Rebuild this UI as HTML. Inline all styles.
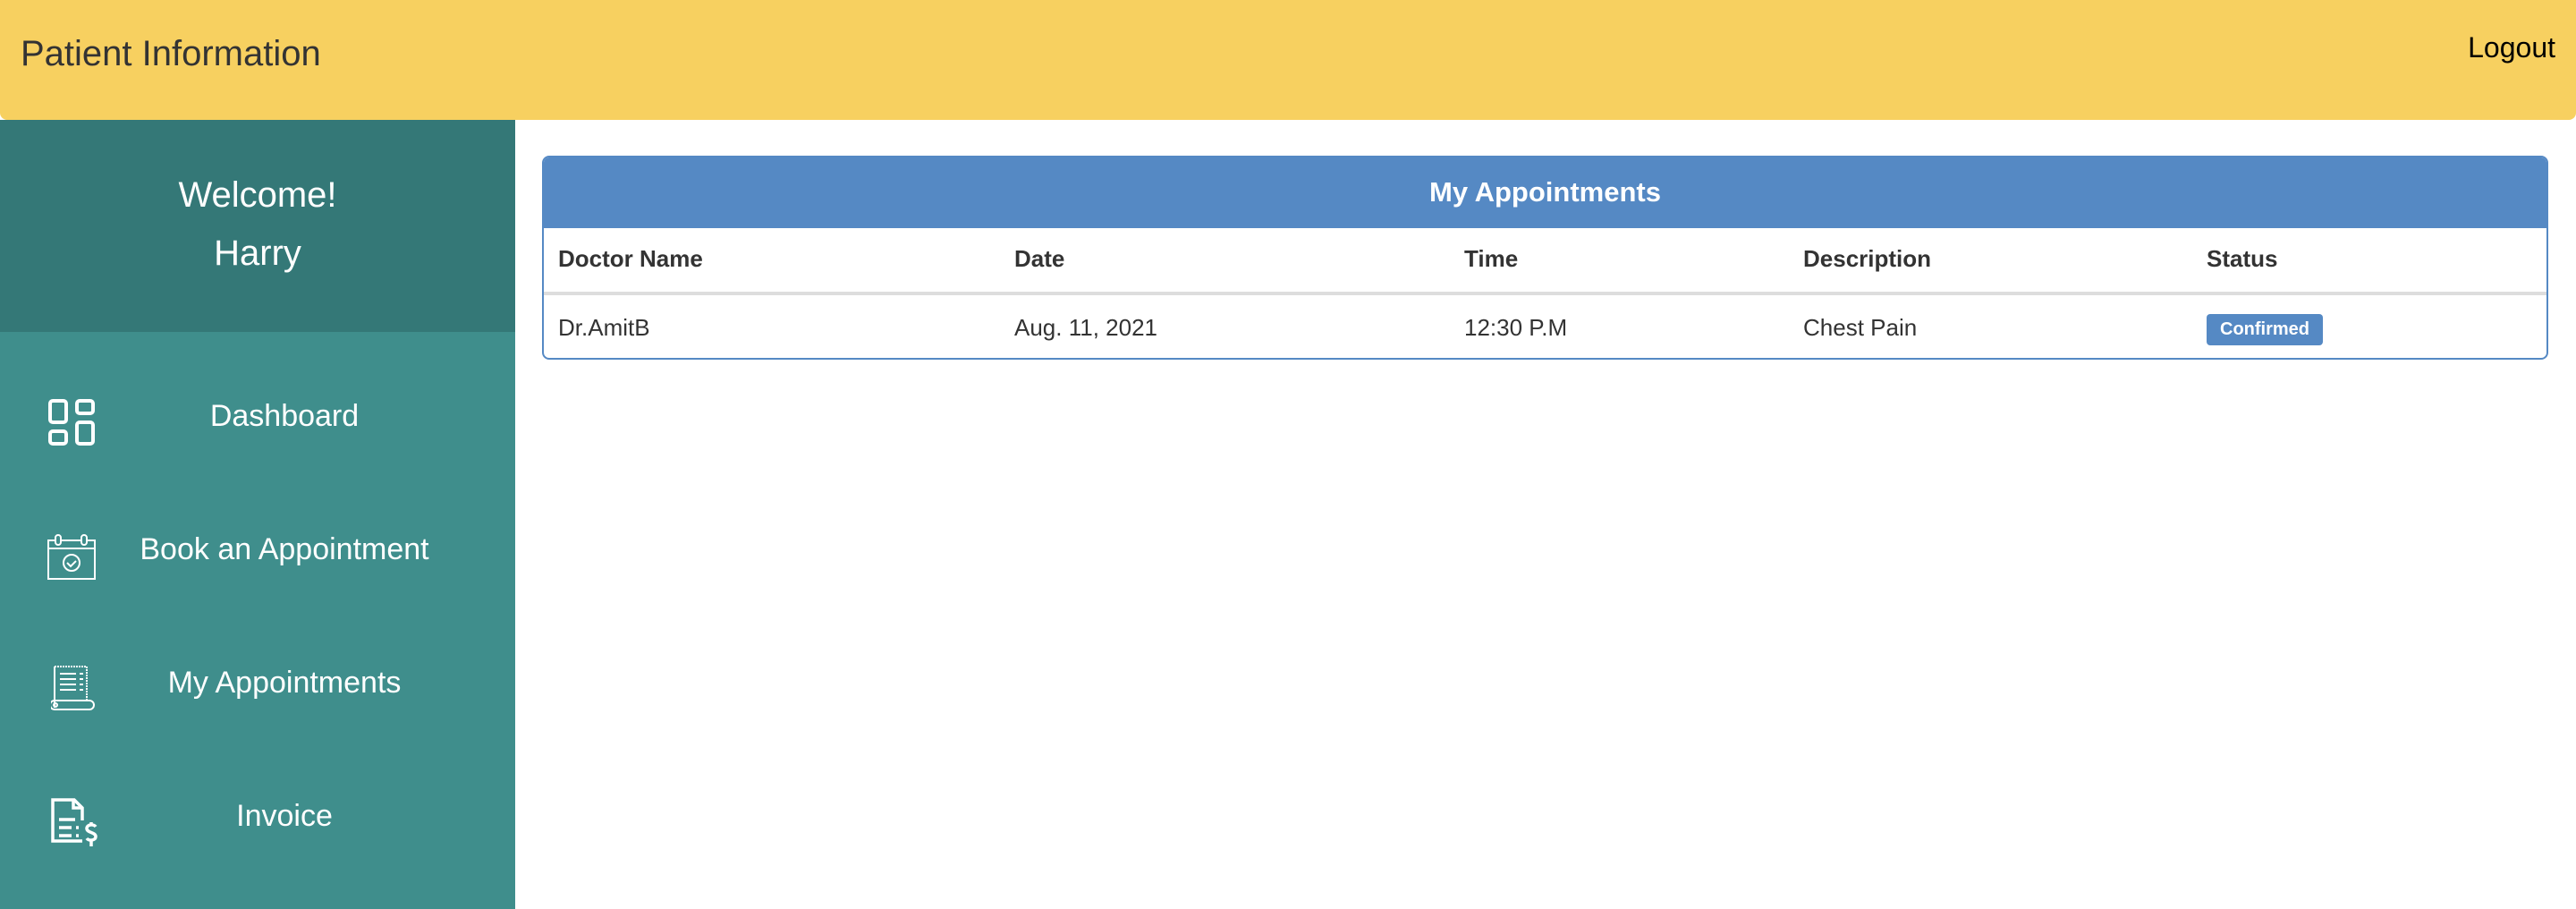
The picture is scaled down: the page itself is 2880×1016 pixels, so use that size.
<!DOCTYPE html>
<html><head><meta charset="utf-8"><style>
*{margin:0;padding:0;box-sizing:border-box}
body{width:2880px;height:1016px;background:#fff;font-family:"Liberation Sans",Arial,sans-serif;position:relative;overflow:hidden}
.hdr{position:absolute;left:0;top:0;width:2880px;height:134px;background:#F7D060;border-radius:0 0 8px 8px}
.title{position:absolute;left:23px;top:38px;font-size:40px;color:#333}
.logout{position:absolute;right:23px;top:35px;font-size:32px;color:#000}
.side1{position:absolute;left:0;top:134px;width:576px;height:237px;background:#347877;color:#fff;text-align:center;font-size:40px;line-height:65px;padding-top:52px}
.side2{position:absolute;left:0;top:371px;width:576px;height:645px;background:#3F8E8C}
.nav{position:absolute;left:0;width:636px;text-align:center;color:#fff;font-size:34px;line-height:40px}
svg.ic{position:absolute}
.card{position:absolute;left:606px;top:174px;width:2243px;height:228px;border:2px solid #5589C4;border-radius:8px;overflow:hidden}
.ch{height:79px;background:#5589C4;color:#fff;font-weight:bold;font-size:31px;text-align:center;line-height:77px}
.th,.td{position:absolute;font-size:26px;color:#333}
.th{font-weight:bold;top:98px}
.td{top:175px}
.line{position:absolute;left:0;right:0;top:150px;height:4px;background:#ddd}
.badge{position:absolute;left:1859px;top:175px;width:130px;height:35px;background:#5589C4;border-radius:4px;color:#fff;font-weight:bold;font-size:20px;text-align:center;line-height:35px}
</style></head><body>
<div class="hdr"><div class="title">Patient Information</div><div class="logout">Logout</div></div>
<div class="side1">Welcome!<br>Harry</div>
<div class="side2"></div>
<div class="nav" style="top:445px">Dashboard</div>
<div class="nav" style="top:594px">Book an Appointment</div>
<div class="nav" style="top:743px">My Appointments</div>
<div class="nav" style="top:892px">Invoice</div>
<svg class="ic" style="left:54px;top:446px" width="52" height="52" viewBox="0 0 52 52" fill="none" stroke="#fff" stroke-width="4"><rect x="2" y="2" width="18" height="24" rx="3"/><rect x="32" y="2" width="18" height="14" rx="3"/><rect x="2" y="36" width="18" height="14" rx="3"/><rect x="32" y="26" width="18" height="24" rx="3"/></svg>
<svg class="ic" style="left:53px;top:596px" width="54" height="52" viewBox="0 0 54 52" fill="none" stroke="#fff" stroke-width="2"><rect x="1" y="8" width="52" height="43"/><line x1="1" y1="17" x2="53" y2="17"/><rect x="9" y="2" width="6" height="11" rx="3" fill="#3F8E8C"/><rect x="38" y="2" width="6" height="11" rx="3" fill="#3F8E8C"/><circle cx="27" cy="33" r="9"/><path d="M22 33l4 4 6-6"/></svg>
<svg class="ic" style="left:57px;top:743px" width="52" height="53" viewBox="0 0 52 53" fill="none" stroke="#fff" stroke-width="2"><path d="M4 2h36v38" stroke-dasharray="2 1"/><path d="M4 2v46"/><path d="M9 40h34a5 5 0 0 1 0 10H4a5 5 0 0 1 0-10z"/><circle cx="5" cy="45" r="2"/><path d="M10 10h18M10 16h18M10 22h18M10 28h18M32 10h4M32 16h4M32 22h4M32 28h4"/></svg>
<svg class="ic" style="left:57px;top:892px" width="54" height="58" viewBox="0 0 54 58" fill="none" stroke="#fff" stroke-width="3.5"><path d="M35 48H2V2h24l9 9v14"/><path d="M25 2v9h10"/><path d="M9 24h18M9 33h14M9 42h14M28 33h3M28 42h3"/><path d="M50 32c-2-3-10-3-10 2s10 4 10 9-8 5-10 2M45 27v4M45 48v6"/></svg>
<div class="card">
<div class="ch">My Appointments</div>
<div class="th" style="left:16px">Doctor Name</div>
<div class="th" style="left:526px">Date</div>
<div class="th" style="left:1029px">Time</div>
<div class="th" style="left:1408px">Description</div>
<div class="th" style="left:1859px">Status</div>
<div class="line"></div>
<div class="td" style="left:16px">Dr.AmitB</div>
<div class="td" style="left:526px">Aug. 11, 2021</div>
<div class="td" style="left:1029px">12:30 P.M</div>
<div class="td" style="left:1408px">Chest Pain</div>
<div class="badge">Confirmed</div>
</div>
</body></html>
